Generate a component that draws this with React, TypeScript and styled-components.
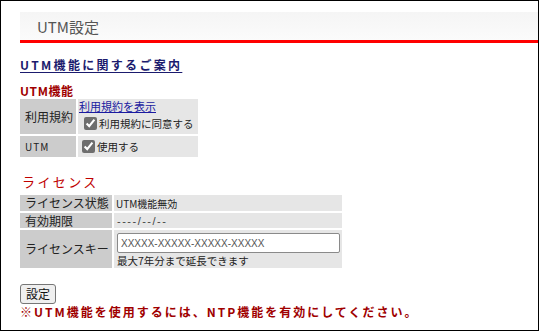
import React from "react";
import styled, { createGlobalStyle } from "styled-components";

const GlobalStyle = createGlobalStyle`
  body {
    margin: 0;
    background: #fff;
    font-family: "Noto Sans CJK JP", sans-serif;
  }
`;

export default function App() {
  return (
    <>
      <GlobalStyle />
      <Frame>
        <Header>UTM設定</Header>
        <GuideLink href="#">UTM機能に関するご案内</GuideLink>

        <SectionTitle $bold>UTM機能</SectionTitle>
        <Table $cols="56px 120px">
          <Label>利用規約</Label>
          <Value>
            <TermsLink href="#">利用規約を表示</TermsLink>
            <CheckRow $indent={5}>
              <Check type="checkbox" checked readOnly />
              利用規約に同意する
            </CheckRow>
          </Value>
          <Label $small>UTM</Label>
          <Value>
            <CheckRow $indent={3}>
              <Check type="checkbox" checked readOnly />
              使用する
            </CheckRow>
          </Value>
        </Table>

        <SectionTitle $gap={17}>ライセンス</SectionTitle>
        <Table $cols="92px 228px" $top={5}>
          <Label $line={16}>ライセンス状態</Label>
          <Value $small>UTM機能無効</Value>
          <Label $line={15}>有効期限</Label>
          <Value $dashes>----/--/--</Value>
          <Label>ライセンスキー</Label>
          <Value>
            <KeyInput defaultValue="XXXXX-XXXXX-XXXXX-XXXXX" />
            <Hint>最大7年分まで延長できます</Hint>
          </Value>
        </Table>

        <SubmitButton>設定</SubmitButton>
        <Warning>※UTM機能を使用するには、NTP機能を有効にしてください。</Warning>
      </Frame>
    </>
  );
}

const Frame = styled.div`
  box-sizing: border-box;
  width: 539px;
  height: 331px;
  border: 1px solid #000;
  padding: 11px 0 0 19px;
  display: flex;
  flex-direction: column;
  align-items: flex-start;
`;

const Header = styled.div`
  box-sizing: border-box;
  align-self: stretch;
  height: 31px;
  padding: 4px 0 0 17px;
  background: linear-gradient(#f5f5f5, #fbfbfb);
  border-bottom: 3px solid #ff0000;
  font-size: 15px;
  line-height: 22px;
  color: #555;
`;

const GuideLink = styled.a`
  margin-top: 14px;
  font-size: 12px;
  font-weight: bold;
  line-height: 16px;
  letter-spacing: 2.3px;
  color: #1b1b6e;
  text-decoration: underline;
  text-underline-offset: 2px;
`;

const SectionTitle = styled.div<{ $bold?: boolean; $gap?: number }>`
  margin-top: ${(p) => p.$gap ?? 10}px;
  padding-left: ${(p) => (p.$bold ? 0 : 2)}px;
  font-size: ${(p) => (p.$bold ? "12px" : "13px")};
  line-height: 16px;
  font-weight: ${(p) => (p.$bold ? "bold" : "normal")};
  letter-spacing: ${(p) => (p.$bold ? "0.6px" : "2.4px")};
  color: ${(p) => (p.$bold ? "#a00000" : "#c00000")};
`;

const Table = styled.div<{ $cols: string; $top?: number }>`
  display: grid;
  grid-template-columns: ${(p) => p.$cols};
  gap: 2px;
  margin-top: ${(p) => p.$top ?? 0}px;
`;

const Label = styled.div<{ $small?: boolean; $line?: number }>`
  display: flex;
  align-items: center;
  padding-left: 5px;
  background: #cccccc;
  color: #222;
  font-size: ${(p) => (p.$small ? "10px" : "12px")};
  line-height: ${(p) => p.$line ?? 14}px;
  letter-spacing: ${(p) => (p.$small ? "1px" : "0")};
`;

const Value = styled.div<{ $small?: boolean; $dashes?: boolean }>`
  display: flex;
  flex-direction: column;
  align-items: flex-start;
  justify-content: center;
  padding-left: ${(p) => (p.$small ? 2 : p.$dashes ? 3 : 1)}px;
  background: #e6e6e6;
  color: #222;
  font-size: ${(p) => (p.$small ? "10px" : "11px")};
  letter-spacing: ${(p) => (p.$dashes ? "1.5px" : "0")};
  ${(p) => p.$dashes && `font-family: "Liberation Sans", sans-serif; color: #444;`}
`;

const TermsLink = styled.a`
  margin-top: 1px;
  font-size: 11px;
  line-height: 13px;
  color: #1a1aa0;
  text-decoration: underline;
`;

const CheckRow = styled.label<{ $indent: number }>`
  display: flex;
  align-items: center;
  margin: 2px 0 2px ${(p) => p.$indent}px;
  font-size: 10.5px;
  line-height: 17px;
  color: #222;
`;

const Check = styled.input`
  width: 13px;
  height: 13px;
  margin: 0 2px 0 0;
  accent-color: #6e6e6e;
`;

const KeyInput = styled.input`
  box-sizing: border-box;
  width: 223px;
  height: 20px;
  margin: 3px 0 0 2px;
  padding: 0 3px;
  border: 1px solid #8a8a8a;
  border-radius: 2px;
  background: #fff;
  font-family: "Liberation Sans", sans-serif;
  font-size: 10px;
  color: #555;
  outline: none;
`;

const Hint = styled.div`
  margin-left: 2px;
  font-size: 10.5px;
  line-height: 15px;
  color: #222;
`;

const SubmitButton = styled.button`
  box-sizing: border-box;
  height: 20px;
  margin-top: 16px;
  padding: 0 5px;
  border: 1px solid #767676;
  border-radius: 3px;
  background: #efefef;
  font-family: "Noto Sans CJK JP", sans-serif;
  font-size: 12px;
  line-height: 18px;
  color: #111;
`;

const Warning = styled.div`
  margin-top: 1px;
  font-size: 12px;
  font-weight: bold;
  line-height: 14px;
  letter-spacing: 2px;
  color: #a00000;
`;
